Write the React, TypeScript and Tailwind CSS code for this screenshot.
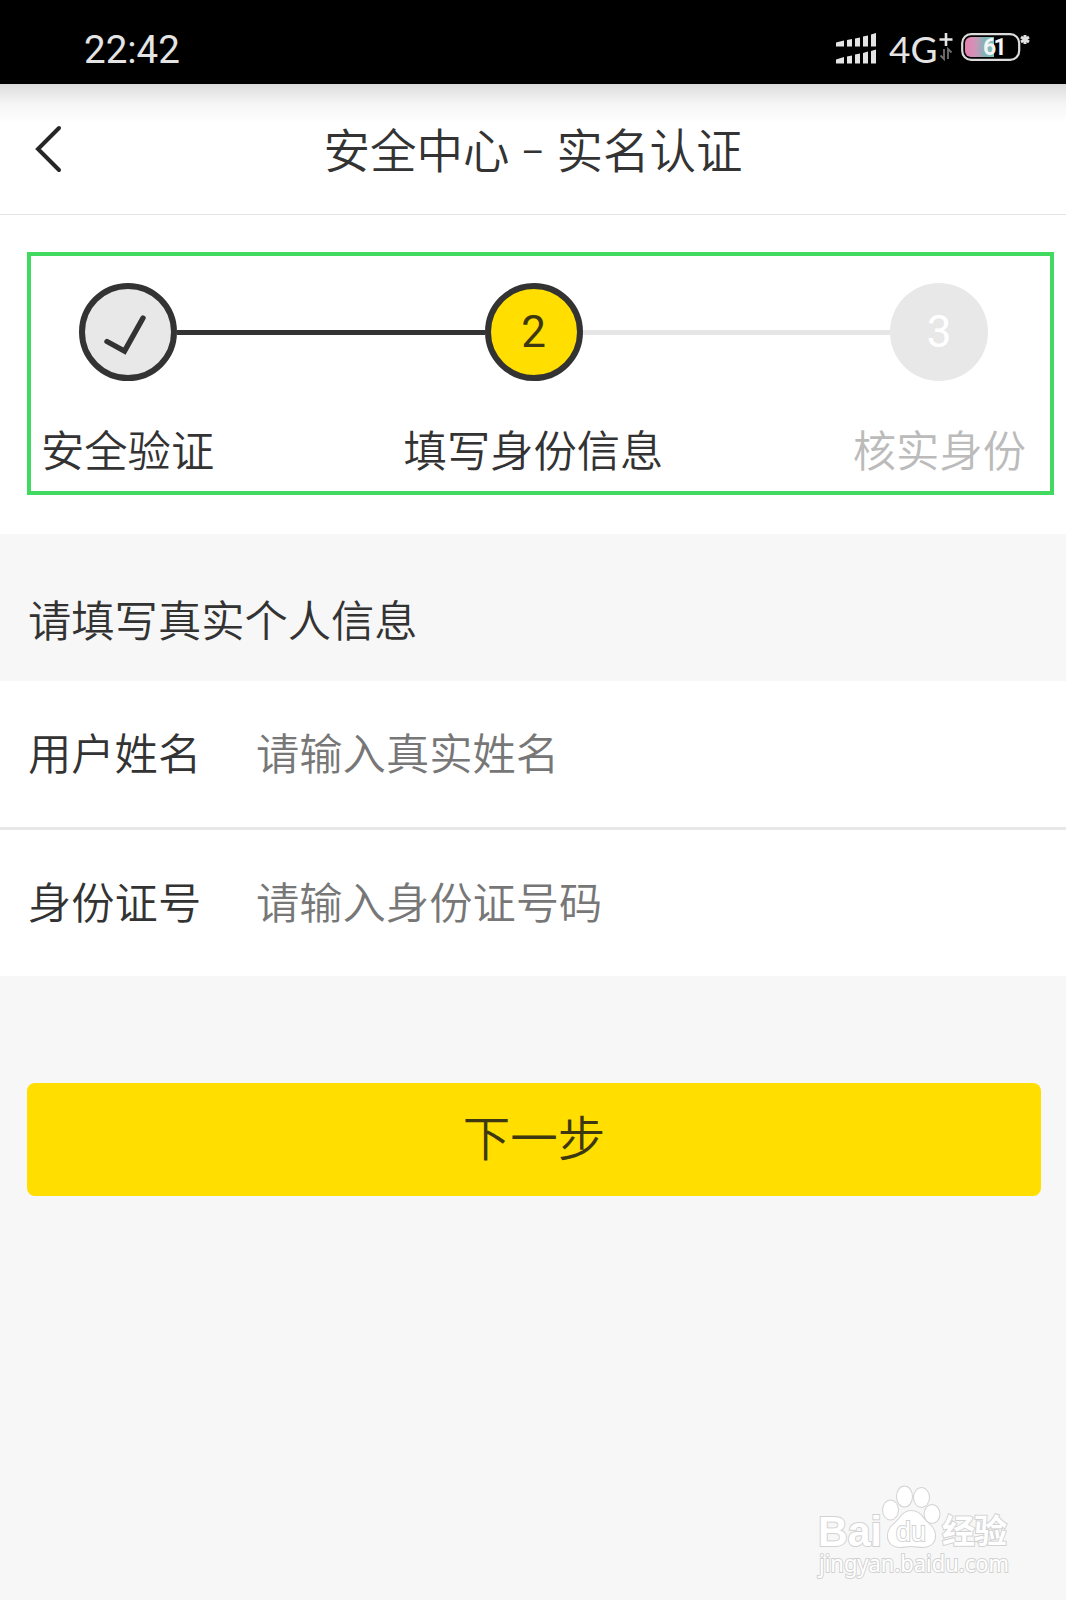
import { Fragment } from "react"

interface Step {
  label: string
  status: "done" | "current" | "pending"
}

interface Field {
  label: string
  placeholder: string
}

const steps: Step[] = [
  { label: "安全验证", status: "done" },
  { label: "填写身份信息", status: "current" },
  { label: "核实身份", status: "pending" },
]

const fields: Field[] = [
  { label: "用户姓名", placeholder: "请输入真实姓名" },
  { label: "身份证号", placeholder: "请输入身份证号码" },
]

const circleStyles = {
  done: "border-[6px] border-[#333333] bg-[#e8e8e8] text-[#333333]",
  current: "border-[6px] border-[#333333] bg-[#ffde00] text-[#3d3810]",
  pending: "bg-[#e8e8e8] text-white",
}

function SignalIcon() {
  return (
    <svg width="40" height="32" viewBox="0 0 40 32" fill="#e4e4e4">
      <path d="M0 9.500L8 7.500v6H0zM11 7l5-1v7.500h-5zM19 5.500l5-1v9h-5zM27 3.500l5-1v11h-5zM35 1.500l5-1.500v13.500h-5z" />
      <path d="M0 26.500L8 24v6.500H0zM11 23.500l5-1v8h-5zM19 21.500l5-1v10h-5zM27 20l5-1.500v12h-5zM35 18l5-1.500v14h-5z" />
    </svg>
  )
}

function NetworkExtras() {
  return (
    <svg width="14" height="30" viewBox="0 0 14 30" fill="none">
      <path d="M7 0v13M0.500 6.500h13" stroke="#e4e4e4" strokeWidth="2.600" />
      <path d="M5 16v10L1.500 22.500M9 26V16l3.500 3.500" stroke="#707070" strokeWidth="1.800" />
    </svg>
  )
}

function BatteryIcon() {
  return (
    <svg width="70" height="30" viewBox="0 0 70 30" fill="none">
      <defs>
        <linearGradient id="charge" x1="0" x2="1" y1="0" y2="0">
          <stop offset="0" stopColor="#e87fb0" />
          <stop offset="0.35" stopColor="#cf94b8" />
          <stop offset="0.7" stopColor="#7fb5b5" />
          <stop offset="1" stopColor="#7cc4c0" />
        </linearGradient>
      </defs>
      <rect x="1.200" y="2.200" width="57" height="25.600" rx="9" stroke="#dcdcdc" strokeWidth="2.200" />
      <path d="M10 5h23v20H10a6 6 0 0 1-6-6v-8a6 6 0 0 1 6-6z" fill="url(#charge)" />
      <text x="22" y="23" fill="#f4f4f4" fontSize="23" fontWeight="700" className="font-['Roboto',sans-serif]">
        6
      </text>
      <text x="32.500" y="23" fill="#f4f4f4" fontSize="23" fontWeight="700" className="font-['Roboto',sans-serif]">
        1
      </text>
      <path d="M64 3v9M60 5l8 5M68 5l-8 5" stroke="#e0e0e0" strokeWidth="3" />
    </svg>
  )
}

function StatusBar() {
  return (
    <div className="flex h-[84px] items-center justify-between bg-black pt-[14px] pr-[35px] pl-[84px]">
      <span className="pt-[2px] font-['Roboto',sans-serif] text-[38.500px] leading-none font-normal text-[#e4e4e4]">22:42</span>
      <div className="flex items-center">
        <SignalIcon />
        <span className="ml-[13px] w-[48px] pb-[2px] font-['Lato',sans-serif] text-[37px] leading-none font-normal text-[#e4e4e4]">
          4G
        </span>
        <div className="mb-[2px] ml-[2px]">
          <NetworkExtras />
        </div>
        <div className="mb-[4px] ml-[8px]">
          <BatteryIcon />
        </div>
      </div>
    </div>
  )
}

function Header() {
  return (
    <header className="grid h-[131px] grid-cols-[120px_1fr_120px] items-center border-b border-[#e4e4e4] bg-linear-to-b from-[#dcdcdc] via-[#f5f5f5] via-15% to-white to-30%">
      <svg className="ml-[33px]" width="30" height="48" viewBox="0 0 30 48" fill="none">
        <path d="M26 3L5 24l21 21" stroke="#262626" strokeWidth="4" strokeLinecap="round" />
      </svg>
      <h1 className="flex justify-center pb-[2px] text-[46.500px] leading-none text-[#333333]">
        <span>安全中心</span>
        <span className="flex w-[47px] items-center justify-center font-['Noto_Sans',sans-serif]">
          <span className="-mt-[3px] scale-x-90 font-light">–</span>
        </span>
        <span>实名认证</span>
      </h1>
    </header>
  )
}

function StepCircle({ step, index }: { step: Step; index: number }) {
  return (
    <div
      className={`flex size-[98px] shrink-0 items-center justify-center rounded-full font-['Roboto',sans-serif] text-[44px] leading-none font-normal ${circleStyles[step.status]}`}
    >
      {step.status === "done" ? (
        <svg className="mt-[7px] mr-[4px]" width="44" height="42" viewBox="0 0 44 42" fill="none">
          <path d="M3 26.500l17.500 9.500L39 3" stroke="currentColor" strokeWidth="5.400" strokeLinecap="round" />
        </svg>
      ) : (
        index + 1
      )}
    </div>
  )
}

function Stepper() {
  return (
    <section className="h-[319px] bg-white pt-[37px] pl-[27px]">
      <div className="h-[243px] w-[1027px] border-4 border-[#42d960]">
        <div className="flex items-center pt-[27px] pr-[62px] pl-[48px]">
          {steps.map((step, i) => (
            <Fragment key={step.label}>
              {i > 0 && (
                <div className={`h-[5px] flex-1 ${step.status === "pending" ? "bg-[#e6e6e6]" : "bg-[#333333]"}`} />
              )}
              <StepCircle step={step} index={i} />
            </Fragment>
          ))}
        </div>
        <div className="mt-[46px] flex justify-between pr-[24px] pl-[10px] text-[43.300px] leading-none">
          {steps.map((step) => (
            <span key={step.label} className={step.status === "pending" ? "text-[#bbbbbb]" : "text-[#333333]"}>
              {step.label}
            </span>
          ))}
        </div>
      </div>
    </section>
  )
}

function FieldRow({ field }: { field: Field }) {
  return (
    <label className="flex h-[146px] items-center bg-white pb-[5px] pl-[28px] text-[43.300px] leading-none text-[#333333]">
      <span className="w-[228px] shrink-0">{field.label}</span>
      <input
        className="h-[70px] min-w-0 flex-1 bg-transparent pb-[2px] outline-none placeholder:text-[#777777]"
        placeholder={field.placeholder}
      />
    </label>
  )
}

function Watermark() {
  return (
    <svg
      className="absolute right-[49px] bottom-[15px]"
      width="206"
      height="104"
      viewBox="0 0 206 104"
      fill="#ffffff"
      stroke="#d2d2d2"
      strokeWidth="2"
      paintOrder="stroke"
    >
      <text x="7" y="64.500" fontSize="43" fontWeight="700" textLength="64" lengthAdjust="spacingAndGlyphs" className="font-['Liberation_Sans',sans-serif]">
        Bai
      </text>
      <ellipse cx="79.500" cy="29" rx="7.500" ry="9.500" />
      <ellipse cx="93.500" cy="15.500" rx="7.500" ry="10" />
      <ellipse cx="110.500" cy="16.500" rx="7.500" ry="9.500" />
      <ellipse cx="121" cy="33" rx="7.500" ry="9" />
      <path d="M100 30c-6 0-9 4-12 8-4 5-11 8-11 17 0 7 5 11 12 11 4 0 7-1 11-1s8 1 12 1c7 0 12-4 12-11 0-9-7-12-11-17-3-4-6-8-13-8z" />
      <text x="85" y="60" fontSize="28" fontWeight="400" textLength="30" lengthAdjust="spacingAndGlyphs" className="font-['Liberation_Sans',sans-serif]">
        du
      </text>
      <text x="131" y="62" fontSize="33" fontWeight="700" textLength="65" className="font-['Noto_Sans_CJK_SC',sans-serif]">
        经验
      </text>
      <text x="8" y="90.500" fontSize="23" fontWeight="400" textLength="190" lengthAdjust="spacingAndGlyphs" className="font-['Noto_Sans',sans-serif]">
        jingyan.baidu.com
      </text>
    </svg>
  )
}

export default function App() {
  return (
    <div className="relative h-[1600px] w-[1066px] overflow-hidden bg-[#f7f7f7] font-['Noto_Sans_CJK_SC',sans-serif] font-[350]">
      <StatusBar />
      <Header />
      <Stepper />
      <h2 className="flex h-[147px] items-center pt-[23px] pl-[28px] text-[43.300px] leading-none text-[#333333]">
        请填写真实个人信息
      </h2>
      <div className="flex flex-col gap-[3px] bg-[#e8e8e8]">
        {fields.map((field) => (
          <FieldRow key={field.label} field={field} />
        ))}
      </div>
      <div className="mt-[107px] px-[27px] pr-[25px]">
        <button className="h-[113px] w-full rounded-lg bg-[#ffde00] pb-[8px] text-[47.500px] leading-none text-[#3d3810]">
          下一步
        </button>
      </div>
      <Watermark />
    </div>
  )
}
